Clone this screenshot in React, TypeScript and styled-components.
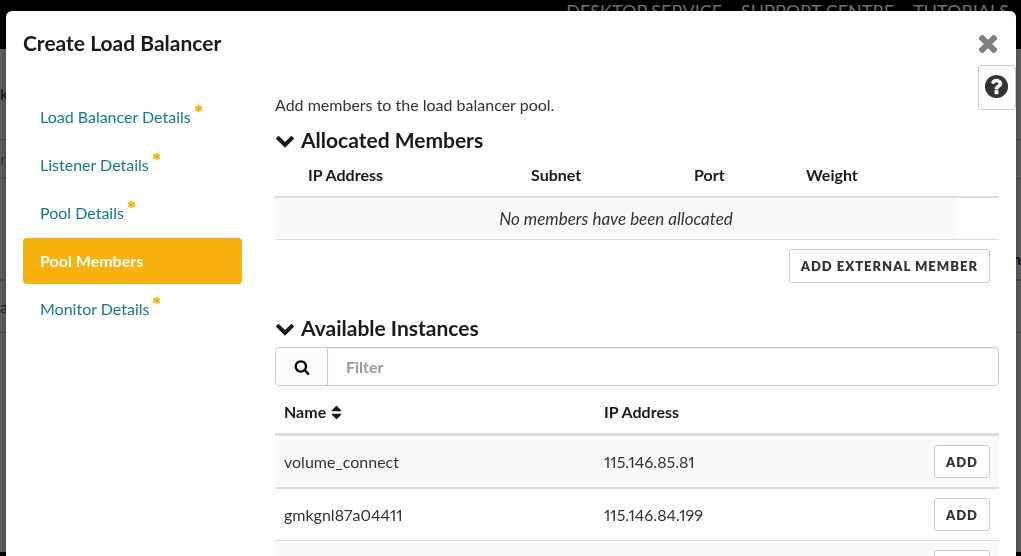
import React from 'react';
import styled, { createGlobalStyle } from 'styled-components';

const GlobalStyle = createGlobalStyle`
  *, *::before, *::after { box-sizing: border-box; }
  html, body { margin: 0; height: 100%; }
  body {
    font-family: Lato, "Open Sans", "Liberation Sans", sans-serif;
    font-size: 16px;
    line-height: 24px;
    font-variant-numeric: proportional-nums;
    color: #333;
    background: #000;
    overflow: hidden;
  }
  button, input { font: inherit; }
`;

const glyphs = {
  close: 'M1490 1322q0 40-28 68l-136 136q-28 28-68 28t-68-28l-294-294-294 294q-28 28-68 28t-68-28l-136-136q-28-28-28-68t28-68l294-294-294-294q-28-28-28-68t28-68l136-136q28-28 68-28t68 28l294 294 294-294q28-28 68-28t68 28l136 136q28 28 28 68t-28 68l-294 294 294 294q28 28 28 68z',
  help: 'M1024 1376v-192q0-14-9-23t-23-9h-192q-14 0-23 9t-9 23v192q0 14 9 23t23 9h192q14 0 23-9t9-23zm256-672q0-88-55.5-163t-138.5-116-170-41q-243 0-371 213-15 24 8 42l132 100q7 6 19 6 16 0 25-12 53-68 86-92 34-24 86-24 48 0 85.5 26t37.5 59q0 38-20 61t-68 45q-63 28-115.5 86.5t-52.5 125.5v36q0 14 9 23t23 9h192q14 0 23-9t9-23q0-19 21.5-49.5t54.5-49.5q32-18 49-28.5t46-35 44.5-48 28-60.5 12.5-81zm384 192q0 209-103 385.5t-279.5 279.5-385.5 103-385.5-103-279.5-279.5-103-385.5 103-385.5 279.5-279.5 385.5-103 385.5 103 279.5 279.5 103 385.5z',
  chevron: 'M1683 808l-742 741q-19 19-45 19t-45-19l-742-741q-19-19-19-45.5t19-45.5l166-165q19-19 45-19t45 19l531 531 531-531q19-19 45-19t45 19l166 165q19 19 19 45.5t-19 45.5z',
  search: 'M1216 832q0-185-131.5-316.5t-316.5-131.5-316.5 131.5-131.5 316.5 131.5 316.5 316.5 131.5 316.5-131.5 131.5-316.5zm512 832q0 52-38 90t-90 38q-54 0-90-38l-343-342q-179 124-399 124-143 0-273.5-55.5t-225-150-150-225-55.5-273.5 55.5-273.5 150-225 225-150 273.5-55.5 273.5 55.5 225 150 150 225 55.5 273.5q0 220-124 399l343 343q37 37 37 90z',
  asterisk: 'M1546 1050q46 26 59.5 77.5t-12.5 97.5l-64 110q-26 46-77.5 59.5t-97.5-12.5l-266-153v307q0 52-38 90t-90 38h-128q-52 0-90-38t-38-90v-307l-266 153q-46 26-97.5 12.5t-77.5-59.5l-64-110q-26-46-12.5-97.5t59.5-77.5l266-154-266-154q-46-26-59.5-77.5t12.5-97.5l64-110q26-46 77.5-59.5t97.5 12.5l266 153v-307q0-52 38-90t90-38h128q52 0 90 38t38 90v307l266-153q46-26 97.5-12.5t77.5 59.5l64 110q26 46 12.5 97.5t-59.5 77.5l-266 154z',
  sort: 'M1408 1088q0 26-19 45l-448 448q-19 19-45 19t-45-19l-448-448q-19-19-19-45t19-45 45-19h896q26 0 45 19t19 45zm0-384q0 26-19 45t-45 19h-896q-26 0-45-19t-19-45 19-45l448-448q19-19 45-19t45 19l448 448q19 19 19 45z',
};

const Svg = styled.svg<{ $size: number }>`
  display: block;
  flex: none;
  width: ${p => p.$size}px;
  height: ${p => p.$size}px;
  fill: currentColor;
`;

const Icon = ({ name, size }: { name: keyof typeof glyphs; size: number }) => (
  <Svg $size={size} viewBox="0 0 1792 1792" aria-hidden="true">
    <path d={glyphs[name]} />
  </Svg>
);

/* Page behind the dialog */
const Page = styled.div`
  display: flex;
  flex-direction: column;
  height: 100vh;
`;

const TopBar = styled.header`
  display: flex;
  justify-content: flex-end;
  gap: 19px;
  height: 49px;
  padding: 0 12px;
  background: #000;
`;

const TopLink = styled.a`
  color: #777;
  font-size: 18px;
  line-height: 22px;
  text-decoration: none;
`;

const PageContent = styled.main`
  flex: 1;
  background: #6b6b6b;
`;

const PageRow = styled.div<{ $height: number; $rule?: number; $bottom?: boolean }>`
  display: flex;
  align-items: ${p => (p.$bottom ? 'flex-end' : 'center')};
  justify-content: space-between;
  height: ${p => p.$height}px;
  padding-bottom: ${p => (p.$bottom ? 8 : 0)}px;
  border-bottom: ${p => p.$rule ?? 1}px solid #575757;
`;

const PageText = styled.span<{ $color: string; $bold?: boolean }>`
  color: ${p => p.$color};
  font-weight: ${p => (p.$bold ? 700 : 400)};
`;

const PageFooter = styled.footer`
  height: 4px;
  background: #000;
`;

const Overlay = styled.div`
  position: fixed;
  inset: 0;
  padding: 11px 5px 0 6px;
  overflow: hidden;
`;

const Dialog = styled.section`
  position: relative;
  min-height: 100%;
  padding: 0 17px;
  background: #fff;
  border-radius: 6px;
  box-shadow: 0 5px 15px rgba(0, 0, 0, 0.5);
`;

const DialogHeader = styled.header`
  display: flex;
  align-items: center;
  justify-content: space-between;
  height: 64px;
  margin-right: -3px;
`;

const DialogTitle = styled.h1`
  margin: 0;
  font-size: 21px;
  line-height: 24px;
  font-weight: 700;
  color: #1a1a1a;
`;

const CloseButton = styled.button`
  padding: 0;
  border: 0;
  background: none;
  color: #808080;
`;

const HelpButton = styled.button`
  position: absolute;
  top: 54px;
  right: 0;
  display: flex;
  align-items: center;
  justify-content: center;
  width: 38px;
  height: 45px;
  padding: 0 1px 2px 0;
  border: 1px solid #ccc;
  border-radius: 3px;
  background: #fff;
  color: #333;
`;

const DialogBody = styled.div`
  display: grid;
  grid-template-columns: 219px 1fr;
  column-gap: 33px;
  padding-top: 18px;
`;

const Steps = styled.nav`
  display: flex;
  flex-direction: column;
  gap: 2px;
  padding-top: 1px;
`;

const Step = styled.a<{ $active?: boolean }>`
  display: flex;
  align-items: center;
  height: 46px;
  padding: 0 17px;
  border-radius: 4px;
  background: ${p => (p.$active ? '#f8b20e' : 'transparent')};
  color: ${p => (p.$active ? '#fff' : '#0a7d91')};
  font-weight: ${p => (p.$active ? 700 : 400)};
  text-decoration: none;
`;

const Required = styled.span`
  align-self: flex-start;
  padding: 10px 0 0 3px;
  color: #f8b20e;
`;

const Panel = styled.div`
  min-width: 0;
`;

const Intro = styled.p`
  margin: 0 0 11px;
`;

const SectionTitle = styled.h2`
  display: flex;
  align-items: center;
  gap: 6px;
  margin: 0;
  font-size: 21px;
  line-height: 24px;
  font-weight: 700;
  color: #1a1a1a;
`;

const AllocatedTable = styled.div`
  padding-top: 2px;
`;

const Table = styled.table`
  width: 100%;
  border-collapse: separate;
  border-spacing: 0;
  table-layout: fixed;
`;

const Th = styled.th<{ $width?: string; $rule: number }>`
  width: ${p => p.$width ?? 'auto'};
  height: ${p => 42 + p.$rule}px;
  padding: 0 9px;
  border-bottom: ${p => p.$rule}px solid #ddd;
  text-align: left;
  font-weight: 700;
  color: #1a1a1a;
`;

const SortLabel = styled.span`
  display: flex;
  align-items: center;
  gap: 2px;
`;

const EmptyCell = styled.td<{ $filled?: boolean }>`
  height: 42px;
  padding: 0 9px;
  border-bottom: 1px solid #ddd;
  background: ${p => (p.$filled ? '#f9f9f9' : '#fff')};
  text-align: center;
  font-size: 17px;
  font-style: italic;
`;

const ActionCell = styled.td`
  padding: 9px;
  text-align: right;
`;

const Button = styled.button<{ $small?: boolean }>`
  height: ${p => (p.$small ? 33 : 34)}px;
  padding: 0 11px;
  border: 1px solid #ccc;
  border-radius: 3px;
  background: #fff;
  color: #333;
  font-size: 13px;
  line-height: 18px;
  font-weight: 800;
  letter-spacing: 1px;
  text-transform: uppercase;
  white-space: nowrap;
`;

const Available = styled.div`
  padding-top: 24px;
`;

const FilterGroup = styled.div`
  display: flex;
  height: 39px;
  margin: 7px 0 5px;
  border: 1px solid #ccc;
  border-radius: 4px;
`;

const FilterAddon = styled.label`
  display: flex;
  align-items: center;
  justify-content: center;
  width: 52px;
  border-right: 1px solid #ccc;
  border-radius: 4px 0 0 4px;
  background: #fcfcfc;
  color: #000;
`;

const FilterInput = styled.input`
  flex: 1;
  min-width: 0;
  padding: 0 18px;
  border: 0;
  border-radius: 0 4px 4px 0;
  box-shadow: inset 0 1px 1px rgba(0, 0, 0, 0.08);
  background: #fff;
  font-weight: 700;
  &::placeholder { color: #999; opacity: 1; }
`;

const Cell = styled.td<{ $odd: boolean; $right?: boolean }>`
  height: ${p => (p.$odd ? 53 : 52)}px;
  padding: 0 9px;
  border-bottom: ${p => (p.$odd ? 2 : 1)}px solid #ddd;
  background: ${p => (p.$odd ? '#f9f9f9' : '#fff')};
  text-align: ${p => (p.$right ? 'right' : 'left')};
`;

const steps = [
  { label: 'Load Balancer Details', required: true },
  { label: 'Listener Details', required: true },
  { label: 'Pool Details', required: true },
  { label: 'Pool Members', active: true },
  { label: 'Monitor Details', required: true },
];

const instances = [
  { name: 'volume_connect', ip: '115.146.85.81' },
  { name: 'gmkgnl87a04411', ip: '115.146.84.199' },
  { name: '', ip: '' },
];

export default function App() {
  return (
    <>
      <GlobalStyle />
      <Page>
        <TopBar>
          <TopLink href="#">DESKTOP SERVICE</TopLink>
          <TopLink href="#">SUPPORT CENTRE</TopLink>
          <TopLink href="#">TUTORIALS</TopLink>
        </TopBar>
        <PageContent>
          <PageRow $height={91}><PageText $color="#111">k</PageText></PageRow>
          <PageRow $height={39}><PageText $color="#3f3f3f">r</PageText></PageRow>
          <PageRow $height={102} $rule={2} $bottom><span /><PageText $color="#111" $bold>n</PageText></PageRow>
          <PageRow $height={52}><PageText $color="#04323a">a</PageText></PageRow>
        </PageContent>
        <PageFooter />
      </Page>
      <Overlay>
        <Dialog role="dialog" aria-labelledby="dialog-title">
          <DialogHeader>
            <DialogTitle id="dialog-title">Create Load Balancer</DialogTitle>
            <CloseButton type="button" aria-label="Close"><Icon name="close" size={28} /></CloseButton>
          </DialogHeader>
          <HelpButton type="button" aria-label="Help"><Icon name="help" size={27} /></HelpButton>
          <DialogBody>
            <Steps>
              {steps.map(s => (
                <Step key={s.label} href="#" $active={s.active}>
                  {s.label}
                  {s.required && <Required><Icon name="asterisk" size={9} /></Required>}
                </Step>
              ))}
            </Steps>
            <Panel>
              <Intro>Add members to the load balancer pool.</Intro>
              <SectionTitle><Icon name="chevron" size={20} />Allocated Members</SectionTitle>
              <AllocatedTable>
                <Table>
                  <thead>
                    <tr>
                      <Th $rule={2} $width="24px" />
                      <Th $rule={2} $width="223px">IP Address</Th>
                      <Th $rule={2}>Subnet</Th>
                      <Th $rule={2} $width="112px">Port</Th>
                      <Th $rule={2} $width="160px">Weight</Th>
                      <Th $rule={2} $width="42px" />
                    </tr>
                  </thead>
                  <tbody>
                    <tr>
                      <EmptyCell $filled colSpan={5}>No members have been allocated</EmptyCell>
                      <EmptyCell />
                    </tr>
                  </tbody>
                  <tfoot>
                    <tr>
                      <ActionCell colSpan={6}><Button type="button">Add external member</Button></ActionCell>
                    </tr>
                  </tfoot>
                </Table>
              </AllocatedTable>
              <Available>
                <SectionTitle><Icon name="chevron" size={20} />Available Instances</SectionTitle>
                <FilterGroup>
                  <FilterAddon htmlFor="filter" aria-label="Filter"><Icon name="search" size={16} /></FilterAddon>
                  <FilterInput id="filter" type="text" placeholder="Filter" />
                </FilterGroup>
                <Table>
                  <thead>
                    <tr>
                      <Th $rule={3} $width="320px"><SortLabel>Name<Icon name="sort" size={17} /></SortLabel></Th>
                      <Th $rule={3}>IP Address</Th>
                      <Th $rule={3} $width="90px" />
                    </tr>
                  </thead>
                  <tbody>
                    {instances.map((row, i) => (
                      <tr key={i}>
                        <Cell $odd={i % 2 === 0}>{row.name}</Cell>
                        <Cell $odd={i % 2 === 0}>{row.ip}</Cell>
                        <Cell $odd={i % 2 === 0} $right><Button type="button" $small>Add</Button></Cell>
                      </tr>
                    ))}
                  </tbody>
                </Table>
              </Available>
            </Panel>
          </DialogBody>
        </Dialog>
      </Overlay>
    </>
  );
}
